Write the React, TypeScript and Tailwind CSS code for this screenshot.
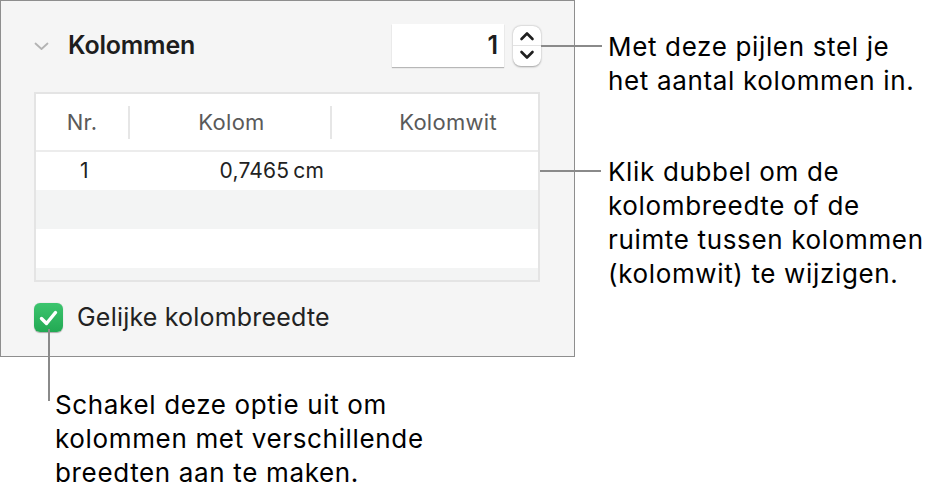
import React from 'react';

const Caption: React.FC<{ children: React.ReactNode; className?: string }> = ({ children, className }) => (
  <p className={`text-[26px] leading-[34px] text-black tracking-[0.65px] ${className ?? ''}`}>{children}</p>
);

const Stepper: React.FC = () => (
  <div className="flex flex-col w-[28px] h-[40px] bg-white rounded-[8px] shadow-[0_0.5px_2px_rgba(0,0,0,0.35)]">
    <div className="flex-1 flex items-center justify-center border-b border-[#e3e3e3]">
      <svg width="16" height="10" viewBox="0 0 16 10" className="mt-[2px]">
        <path d="M2.5 8 L8 2.5 L13.5 8" fill="none" stroke="#1f1f1f" strokeWidth="2.6" strokeLinecap="round" strokeLinejoin="round" />
      </svg>
    </div>
    <div className="flex-1 flex items-center justify-center">
      <svg width="16" height="10" viewBox="0 0 16 10" className="mb-[2px]">
        <path d="M2.5 2 L8 7.5 L13.5 2" fill="none" stroke="#1f1f1f" strokeWidth="2.6" strokeLinecap="round" strokeLinejoin="round" />
      </svg>
    </div>
  </div>
);

const ColumnsPanel: React.FC = () => (
  <div className="w-[575px] h-[357px] border border-[#8e8e8e] bg-[#f5f5f5] pl-[33px] pt-[23px]">
    <div className="flex items-center h-[43px]">
      <svg width="15" height="9" viewBox="0 0 15 9" className="mt-[2px]">
        <path d="M1.5 1.5 L7.5 7 L13.5 1.5" fill="none" stroke="#b3b3b3" strokeWidth="1.8" strokeLinecap="round" strokeLinejoin="round" />
      </svg>
      <span className="ml-[19px] text-[25px] font-semibold text-[#1d1d1d] tracking-[-0.2px]">Kolommen</span>
      <div className="ml-auto flex items-center">
        <div className="w-[112px] h-[43px] bg-white shadow-[0_1px_1px_rgba(0,0,0,0.25)] flex items-center justify-end pr-[6px] text-[25px] font-semibold text-[#1d1d1d]">
          1
        </div>
        <div className="ml-[9px] mr-[33px]">
          <Stepper />
        </div>
      </div>
    </div>

    <div className="mt-[25px] w-[506px] h-[190px] border-2 border-[#e4e4e4] bg-white flex flex-col overflow-hidden">
      <div className="h-[58px] flex items-center text-[22px] tracking-[0.3px] text-[#5a5a5a] border-b-2 border-[#ececec]">
        <div className="w-[94px] h-[33px] flex items-center justify-center border-r-2 border-[#e6e6e6]">Nr.</div>
        <div className="w-[202px] h-[33px] flex items-center justify-center border-r-2 border-[#e6e6e6] pl-[3px]">Kolom</div>
        <div className="flex-1 flex items-center justify-end pr-[41px]">Kolomwit</div>
      </div>
      <div className="h-[38px] flex items-center text-[21px] tracking-[0.2px] text-[#222]">
        <div className="w-[100px] pl-[44px]">1</div>
        <div className="w-[188px] text-right">
          0,7465<span className="ml-[4px]">cm</span>
        </div>
      </div>
      <div className="h-[39px] bg-[#f3f4f4]" />
      <div className="h-[39px] bg-white" />
      <div className="flex-1 bg-[#f3f4f4]" />
    </div>

    <div className="mt-[17px] flex items-center">
      <div className="w-[29px] h-[29px] rounded-[6px] bg-gradient-to-b from-[#3cc56e] to-[#22a953] flex items-center justify-center shadow-[0_0.5px_1px_rgba(0,0,0,0.3)]">
        <svg width="21" height="18" viewBox="0 0 21 18">
          <path d="M3.5 9.5 L8.5 14.5 L17.5 3.5" fill="none" stroke="white" strokeWidth="3.4" strokeLinecap="round" strokeLinejoin="round" />
        </svg>
      </div>
      <span className="ml-[14px] text-[25px] text-[#222] tracking-[0.2px]">Gelijke kolombreedte</span>
    </div>
  </div>
);

export default function App() {
  return (
    <div className="relative w-[939px] h-[497px] bg-white flex" style={{ fontFamily: 'Inter, "Noto Sans", sans-serif' }}>
      <div className="flex flex-col">
        <ColumnsPanel />
        <Caption className="pl-[55px] mt-[31px]">
          Schakel deze optie uit om
          <br />
          kolommen met verschillende
          <br />
          breedten aan te maken.
        </Caption>
      </div>
      <div className="flex flex-col pl-[33px] pt-[30px]">
        <Caption>
          Met deze pijlen stel je
          <br />
          het aantal kolommen in.
        </Caption>
        <Caption className="mt-[57px]">
          Klik dubbel om de
          <br />
          kolombreedte of de
          <br />
          ruimte tussen kolommen
          <br />
          (kolomwit) te wijzigen.
        </Caption>
      </div>

      {/* leader lines */}
      <div className="absolute left-[541px] top-[45px] w-[61px] h-[2px] bg-[#8a8a8a]" />
      <div className="absolute left-[540px] top-[170px] w-[61px] h-[2px] bg-[#8a8a8a]" />
      <div className="absolute left-[48px] top-[329px] w-[2px] h-[72px] bg-[#8a8a8a]" />
    </div>
  );
}
